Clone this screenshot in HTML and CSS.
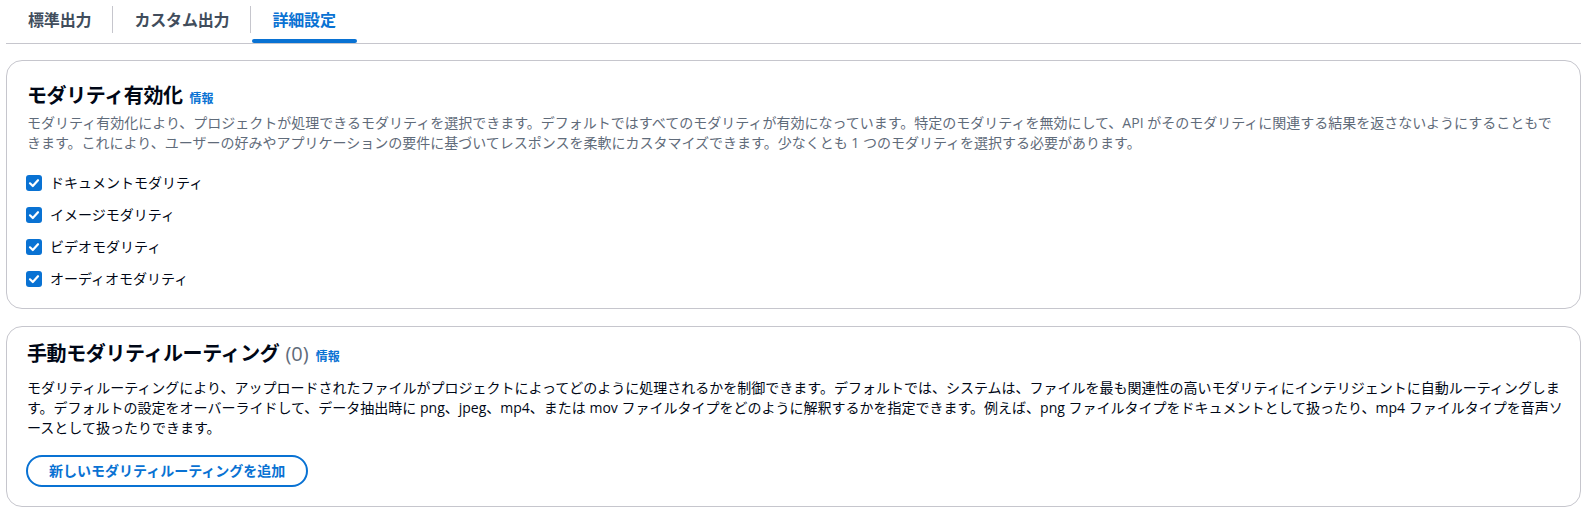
FILE: index.html
```html
<!DOCTYPE html>
<html lang="ja">
<head>
<meta charset="utf-8">
<link rel="stylesheet" href="styles.css">
</head>
<body>
<div class="page">
  <div class="tabs">
    <div class="tab">標準出力</div>
    <div class="sep"></div>
    <div class="tab">カスタム出力</div>
    <div class="sep"></div>
    <div class="tab active">詳細設定</div>
  </div>

  <section class="container first">
    <div class="head">
      <h2 class="title">モダリティ有効化<a class="info">情報</a></h2>
      <p class="desc">モダリティ有効化により、プロジェクトが処理できるモダリティを選択できます。デフォルトではすべてのモダリティが有効になっています。特定のモダリティを無効にして、API がそのモダリティに関連する結果を返さないようにすることもできます。これにより、ユーザーの好みやアプリケーションの要件に基づいてレスポンスを柔軟にカスタマイズできます。少なくとも 1 つのモダリティを選択する必要があります。</p>
    </div>
    <div class="checks">
      <label class="check"><svg class="box" width="16" height="16" viewBox="0 0 16 16"><rect width="16" height="16" rx="3" fill="#0972d3"/><polyline points="4,8.3 6.8,11 12,5.2" fill="none" stroke="#fff" stroke-width="2.2" stroke-linecap="round" stroke-linejoin="round"/></svg><span>ドキュメントモダリティ</span></label>
      <label class="check"><svg class="box" width="16" height="16" viewBox="0 0 16 16"><rect width="16" height="16" rx="3" fill="#0972d3"/><polyline points="4,8.3 6.8,11 12,5.2" fill="none" stroke="#fff" stroke-width="2.2" stroke-linecap="round" stroke-linejoin="round"/></svg><span>イメージモダリティ</span></label>
      <label class="check"><svg class="box" width="16" height="16" viewBox="0 0 16 16"><rect width="16" height="16" rx="3" fill="#0972d3"/><polyline points="4,8.3 6.8,11 12,5.2" fill="none" stroke="#fff" stroke-width="2.2" stroke-linecap="round" stroke-linejoin="round"/></svg><span>ビデオモダリティ</span></label>
      <label class="check"><svg class="box" width="16" height="16" viewBox="0 0 16 16"><rect width="16" height="16" rx="3" fill="#0972d3"/><polyline points="4,8.3 6.8,11 12,5.2" fill="none" stroke="#fff" stroke-width="2.2" stroke-linecap="round" stroke-linejoin="round"/></svg><span>オーディオモダリティ</span></label>
    </div>
  </section>

  <section class="container second">
    <h2 class="title">手動モダリティルーティング <span class="count">(0)</span><a class="info">情報</a></h2>
    <p class="body">モダリティルーティングにより、アップロードされたファイルがプロジェクトによってどのように処理されるかを制御できます。デフォルトでは、システムは、ファイルを最も関連性の高いモダリティにインテリジェントに自動ルーティングします。デフォルトの設定をオーバーライドして、データ抽出時に png、jpeg、mp4、または mov ファイルタイプをどのように解釈するかを指定できます。例えば、png ファイルタイプをドキュメントとして扱ったり、mp4 ファイルタイプを音声ソースとして扱ったりできます。</p>
    <button class="btn">新しいモダリティルーティングを追加</button>
  </section>
</div>
</body>
</html>
```

FILE: styles.css
```css
* { box-sizing: border-box; }
html, body { margin: 0; padding: 0; background: #fff; }
body {
  font-family: "Open Sans", "Noto Sans CJK JP", sans-serif;
  color: #000716;
  font-size: 14px;
  line-height: 20px;
}
.page {
  padding: 0 7px 0 6px;
}
.tabs {
  display: flex;
  align-items: center;
  height: 44px;
  border-bottom: 1px solid #c6c6cd;
  padding-left: 1px;
}
.tab {
  position: relative;
  height: 43px;
  display: flex;
  align-items: center;
  padding: 0 21px 3px;
  font-size: 16px;
  font-weight: 700;
  color: #414d5c;
  letter-spacing: -0.01em;
}
.tab.active { color: #0972d3; }
.tab.active::after {
  content: "";
  position: absolute;
  left: 1px;
  right: 0;
  bottom: 0;
  height: 4px;
  border-radius: 2px;
  background: #0972d3;
}
.sep {
  width: 1px;
  height: 27px;
  background: #c6c6cd;
  align-self: flex-start;
  margin-top: 6px;
}
.container {
  border: 1px solid #c6c6cd;
  border-radius: 16px;
  padding: 0 17px 19px 20px;
  background: #fff;
}
.container.first {
  margin-top: 16px;
  padding-top: 23px;
}
.container.second {
  margin-top: 17px;
  padding-top: 15px;
}
.title {
  margin: 0;
  font-size: 20px;
  line-height: 24px;
  font-weight: 700;
  letter-spacing: -0.02em;
  color: #000716;
  display: flex;
  align-items: baseline;
}
.count {
  font-weight: 400;
  color: #5f6b7a;
  margin-left: 6px;
  letter-spacing: 0;
}
.info {
  font-size: 12px;
  font-weight: 700;
  color: #0972d3;
  letter-spacing: 0;
  margin-left: 7px;
  line-height: 16px;
}
.desc {
  margin: 5px 0 0;
  color: #5f6b7a;
}
.checks {
  display: flex;
  flex-direction: column;
  gap: 12px;
  margin-top: 20px;
}
.check {
  display: flex;
  align-items: center;
  gap: 8px;
  height: 20px;
  color: #000716;
}
.box { flex: none; margin-left: -1px; }
.body {
  margin: 12px 0 0;
  color: #000716;
}
.btn {
  margin-top: 17px;
  margin-left: -1px;
  height: 32px;
  padding: 0 21px;
  border: 2px solid #0972d3;
  border-radius: 20px;
  background: #fff;
  color: #0972d3;
  font-family: inherit;
  font-size: 14px;
  font-weight: 700;
  line-height: 20px;
}
```
